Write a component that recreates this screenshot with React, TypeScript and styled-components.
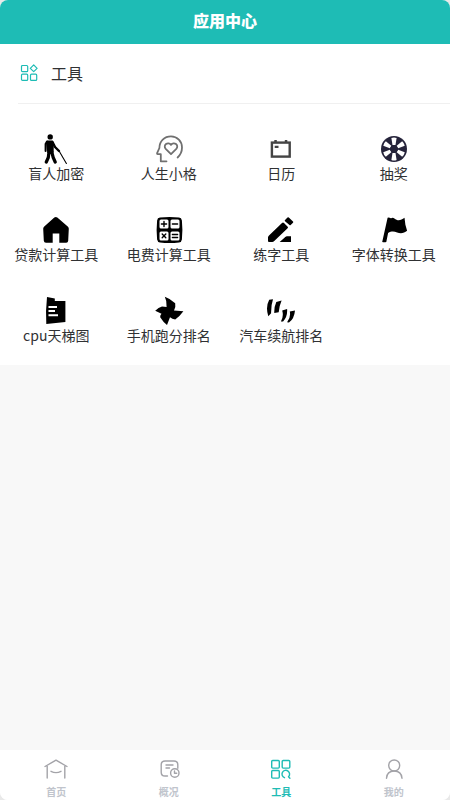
import React from "react";
import styled, { createGlobalStyle } from "styled-components";

const TEAL = "#1ebcb5";

const GlobalStyle = createGlobalStyle`
  * { box-sizing: border-box; }
  body {
    margin: 0;
    background: #e9e9e9;
    font-family: "Noto Sans CJK SC", sans-serif;
    color: #303133;
  }
`;

const Page = styled.div`
  display: flex;
  flex-direction: column;
  min-height: 100vh;
  overflow: hidden;
  border-radius: 8px;
  background: #f8f8f8;
`;

const Header = styled.header`
  display: flex;
  align-items: center;
  justify-content: center;
  height: 44px;
  padding-bottom: 4px;
  background: ${TEAL};
  color: #fff;
`;

const Title = styled.h1`
  margin: 0;
  font-size: 16px;
  line-height: 24px;
  font-weight: 900;
`;

const Panel = styled.section`
  background: #fff;
`;

const SectionHead = styled.div`
  display: flex;
  align-items: center;
  gap: 12px;
  height: 60px;
  margin-left: 18px;
  padding: 0 0 2px 1px;
  border-bottom: 1px solid #f0f0f0;
`;

const SectionTitle = styled.h2`
  margin: 0;
  font-size: 16px;
  line-height: 24px;
  font-weight: 400;
`;

const Grid = styled.div`
  display: grid;
  grid-template-columns: repeat(4, minmax(0, 1fr));
  padding-top: 18px;
`;

const Tool = styled.a`
  display: flex;
  flex-direction: column;
  align-items: center;
  height: 81px;
  padding-top: 12px;
  color: #303133;
  font-size: 14px;
  line-height: 18px;
  white-space: nowrap;
  text-decoration: none;
`;

const TabBar = styled.nav`
  display: flex;
  height: 50px;
  margin-top: auto;
  background: #fff;
`;

const Tab = styled.a<{ $active?: boolean }>`
  display: flex;
  flex: 1;
  flex-direction: column;
  align-items: center;
  gap: 4px;
  padding-top: 7px;
  color: ${(p) => (p.$active ? TEAL : "#c0c4cc")};
  font-size: 10px;
  line-height: 14px;
  font-weight: 700;
  text-decoration: none;
`;

const Icon = styled.svg<{ $size: number; $color?: string }>`
  flex: none;
  width: ${(p) => p.$size}px;
  height: ${(p) => p.$size}px;
  color: ${(p) => p.$color ?? "#000"};
`;

const line = { fill: "none", stroke: "currentColor", strokeLinecap: "round", strokeLinejoin: "round" } as const;

const tools: { name: string; color?: string; art: React.ReactNode }[] = [
  {
    name: "盲人加密",
    art: (
      <>
        <circle cx="9.2" cy="2.9" r="2.7" fill="currentColor" />
        <path d="M6 6.5h5.5l1.2 2v10l-6.4.5L5 9z" fill="currentColor" />
        <g {...line}>
          <path d="M6 7.5L4.6 10v7" strokeWidth="2" />
          <path d="M11.5 8l2.5 5 4 4" strokeWidth="2.4" />
          <path d="M8 18l-.7 5.5L5.3 28M10.8 18l1.4 5.5 2 4.5" strokeWidth="3.2" />
          <path d="M17.8 16.5l7.6 13" strokeWidth="1.1" />
        </g>
      </>
    ),
  },
  {
    name: "人生小格",
    color: "#707070",
    art: (
      <g {...line} strokeWidth="1.8">
        <path d="M12.500 27.300H6.800V20.200H3.900q-1.200-.2-.7-1.400L5.400 14C5.400 7 10.400 2.400 17 2.400c6.300 0 11 5 11 11.200 0 4-1.600 7.400-4.400 9.900" />
        <path d="M17 20.200l-5.300-5.300c-3.200-3.700 2.300-8 5.300-4 3-4 8.500.3 5.300 4z" />
      </g>
    ),
  },
  {
    name: "日历",
    color: "#444",
    art: (
      <>
        <rect x="5.9" y="8.6" width="17.8" height="14" fill="none" stroke="currentColor" strokeWidth="2.4" />
        <path d="M8.300 6h2.500v3H8.300zM18.800 6h2.500v3h-2.500zM8.700 11.700h3.800V14H8.700z" fill="currentColor" />
      </>
    ),
  },
  {
    name: "抽奖",
    color: "#25233a",
    art: (
      <>
        <circle cx="15" cy="15" r="13" fill="currentColor" />
        {[0, 60, 120, 180, 240, 300].map((a) => (
          <path key={a} d="M12.400 4.100q2.600-1 5.200 0L16.500 11h-3z" fill="#fff" transform={`rotate(${a} 15 15)`} />
        ))}
        <circle cx="15" cy="15" r="3.6" fill="currentColor" />
      </>
    ),
  },
  {
    name: "贷款计算工具",
    art: (
      <path
        d="M13.300 2.500q1.500-1 3 0L27 11.700q.8.800.8 2l-.6 12q-.2 2-2 2H18.300V18.400H11.700v9.300H5q-2-.1-2.200-2l-.6-12q0-1.200.8-2z"
        fill="currentColor"
      />
    ),
  },
  {
    name: "电费计算工具",
    art: (
      <>
        <path d="M6 2.500q9.500-1 19 0 2.500.2 2.900 2.900 1 9.600 0 19.200-.3 2.700-2.900 2.900-9.500 1-19 0-2.500-.2-2.900-2.900-1-9.600 0-19.200.3-2.700 2.900-2.900z" fill="currentColor" />
        <g fill="#fff">
          <rect x="5.5" y="4.6" width="9" height="9" rx="1.5" />
          <rect x="16.5" y="4.6" width="9" height="9" rx="1.5" />
          <rect x="5.5" y="16.4" width="9" height="9" rx="1.5" />
          <rect x="16.5" y="16.4" width="9" height="9" rx="1.5" />
        </g>
        <path d="M7.400 9h5.200M10 6.400v5.200M18.400 9h5.200M8.200 19.100l3.600 3.600M11.800 19.100l-3.600 3.600M18.400 19.500h5.200M18.400 22.500h5.200" {...line} strokeWidth="1.4" />
      </>
    ),
  },
  {
    name: "练字工具",
    art: (
      <path
        d="M2 22.500Q2 21.500 3 20.500L16 8q1-.8 2 0l3.700 3.700q.7.700-.1 1.500L8 26.200q-.7.700-1.700.7H3q-1 0-1-1zM19 6.200q-.6-.6 0-1.200L21.500 2.500q.6-.6 1.300 0L27 6.500q.6.600 0 1.200L24.700 10q-.6.600-1.200 0zM13.700 26.900l5.600-5q.7-.7 1.700-.7h4v5.700z"
        fill="currentColor"
      />
    ),
  },
  {
    name: "字体转换工具",
    art: <path d="M8.600 2.800q1-.7 2 0 1 .8 2.200.2 1.300-.6 2.600.5c3.300 2.800 6.500 2 10.100-.7l.9 7 1.700 6c-3 2.600-6.500 3.100-10 1.700-3.200-1.300-6-1.300-9 .6L7.300 27q-2 .5-4.100 0z" fill="currentColor" />,
  },
  {
    name: "cpu天梯图",
    art: (
      <>
        <path d="M6 1l7.800 1.400V5h10.600v21L5.300 28q-.8-13.500.7-27z" fill="currentColor" />
        <path d="M7.500 11h8.500M7.500 15h6.500M7.500 19.200H17" stroke="#fff" strokeWidth="1.9" />
      </>
    ),
  },
  {
    name: "手机跑分排名",
    art: <path d="M10.800.8Q17 3 21.200 7.300q.8 4-1.200 7.200l9.400.7Q26 20 21.200 23.400q-3-.2-5.200-2.200L13 28.900Q9 26 6.200 21.300q-.3-2 1.300-3.500L1.200 14.700Q4.500 11.500 8 10.600l4.600.4Q13 5 10.800.8z" fill="currentColor" />,
  },
  {
    name: "汽车续航排名",
    art: (
      <path
        d="M3.200 3.800L7 3.300Q5 9 5.100 17.300L2.300 20.300Q-.7 11 3.200 3.800zM10.300 6l5.300-1.500Q13.200 10 12.700 16.300l-4.400.8Q8 11 10.300 6zM16.200 14.500l4.900-1.400q.6 7.700-4 12.300l-2.200.1q3-5 1.300-11zM23.800 15.600l5.200-1.200Q28.300 22.500 23 26.600l-1.900-.3Q25 21 23.800 15.600z"
        fill="currentColor"
      />
    ),
  },
];

const tabs: { name: string; active?: boolean; art: React.ReactNode }[] = [
  {
    name: "首页",
    art: <path d="M1 9.500L12 3.200l11 6.300M3.200 9v12M20.800 9v12M7 14.300q5 2.600 10 0" />,
  },
  {
    name: "概况",
    art: (
      <>
        <path d="M10.500 19H8q-3.800 0-3.800-3.800V7.800Q4.200 4 8 4h9q3.800 0 3.800 3.800v3.400M9 8h7M9 11h3.500" />
        <circle cx="17.8" cy="16" r="4.2" />
        <path d="M17.500 14v2.300h2.200" />
      </>
    ),
  },
  {
    name: "工具",
    active: true,
    art: (
      <>
        <rect x="2.7" y="3.5" width="7.6" height="7.6" rx="1" />
        <rect x="13.2" y="3.5" width="7.6" height="7.6" rx="1" />
        <rect x="2.7" y="13.5" width="7.6" height="7.6" rx="1" />
        <path d="M15.500 20.700a3.800 3.800 0 1 1 4-.9l1.400 1.500" />
      </>
    ),
  },
  {
    name: "我的",
    art: (
      <>
        <circle cx="12.2" cy="8.5" r="5.5" />
        <path d="M4.500 21.200c.3-4.500 3.400-7.200 7.700-7.200s7.400 2.700 7.800 7.200" />
      </>
    ),
  },
];

export default function App() {
  return (
    <>
      <GlobalStyle />
      <Page>
        <Header>
          <Title>应用中心</Title>
        </Header>
        <main>
          <Panel>
            <SectionHead>
              <Icon $size={20} $color={TEAL} viewBox="0 0 20 20" aria-hidden="true">
                <g {...line} strokeWidth="1.2">
                  <rect x="2.5" y="2.5" width="6.2" height="6.2" rx="1" />
                  <path d="M14.700 1.900l3.400 3.400-3.400 3.400-3.400-3.400z" />
                  <rect x="2.5" y="11.2" width="6.2" height="6.2" rx="1" />
                  <rect x="11.5" y="11.2" width="6.2" height="6.2" rx="1" />
                </g>
              </Icon>
              <SectionTitle>工具</SectionTitle>
            </SectionHead>
            <Grid>
              {tools.map((t) => (
                <Tool key={t.name} href="#">
                  <Icon $size={30} $color={t.color} viewBox="0 0 30 30" aria-hidden="true">
                    {t.art}
                  </Icon>
                  {t.name}
                </Tool>
              ))}
            </Grid>
          </Panel>
        </main>
        <TabBar>
          {tabs.map((t) => (
            <Tab key={t.name} href="#" $active={t.active} aria-current={t.active ? "page" : undefined}>
              <Icon $size={24} $color={t.active ? TEAL : "#a3a3a8"} viewBox="0 0 24 24" aria-hidden="true">
                <g {...line} strokeWidth="1.4">
                  {t.art}
                </g>
              </Icon>
              {t.name}
            </Tab>
          ))}
        </TabBar>
      </Page>
    </>
  );
}
